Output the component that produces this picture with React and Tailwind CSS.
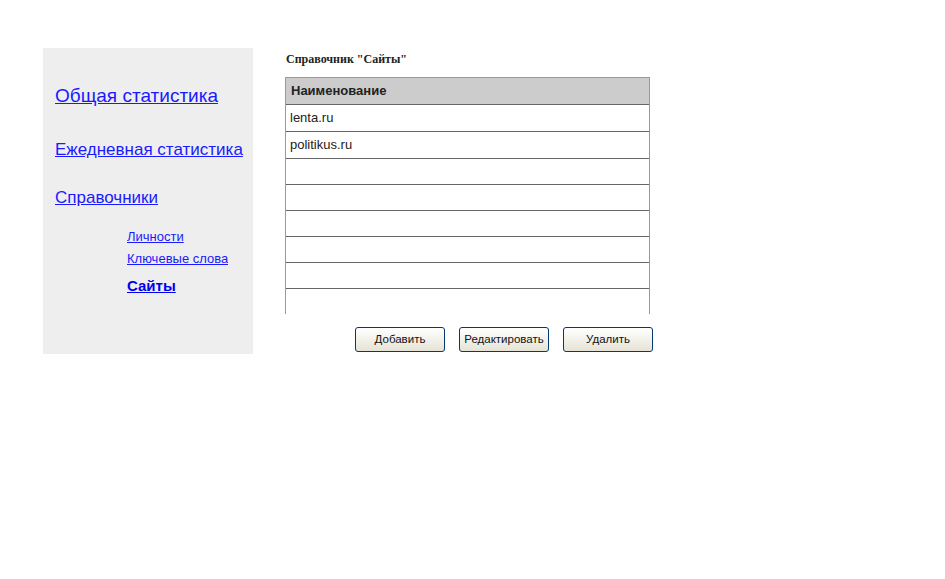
export default function App() {
  const rows = ['lenta.ru', 'politikus.ru']
  const empty = [0, 1, 2, 3, 4, 5]

  return (
    <div className="min-h-[579px] bg-white pl-[43px] pt-[48px] font-['Liberation_Sans',Arial,sans-serif]">
      <div className="flex items-start">
        {/* left menu */}
        <div className="h-[306px] w-[210px] bg-[#eeeeee] pl-[12px] pt-[37px]">
          <a href="#" className="block whitespace-nowrap text-[19px] leading-[22px] text-[#1a1aff] underline">
            Общая статистика
          </a>
          <a href="#" className="mt-[33px] block whitespace-nowrap text-[17px] leading-[20px] text-[#1a1aff] underline">
            Ежедневная статистика
          </a>
          <a href="#" className="mt-[28px] block whitespace-nowrap text-[17px] leading-[20px] text-[#1a1aff] underline">
            Справочники
          </a>
          <div className="pl-[72px]">
            <a href="#" className="mt-[21px] block w-[101px] overflow-hidden whitespace-nowrap text-[13px] leading-[16px] text-[#1a1aff] underline">
              Личности
            </a>
            <a href="#" className="mt-[6px] block w-[101px] overflow-hidden whitespace-nowrap text-[13px] leading-[16px] text-[#1a1aff] underline">
              Ключевые слова
            </a>
            <a href="#" className="mt-[10px] block whitespace-nowrap text-[15px] font-bold leading-[18px] text-[#0000ee] underline">
              Сайты
            </a>
          </div>
        </div>

        {/* main */}
        <div className="ml-[32px]">
          <div className="mt-[3px] pl-[1px] font-['Liberation_Serif','Times_New_Roman',serif] text-[12px] font-bold leading-[16px] text-[#222]">
            Справочник "Сайты"
          </div>

          <div className="mt-[10px] h-[237px] w-[365px] overflow-hidden border-x border-t border-[#999] text-[13px] text-[#222]">
            <div className="h-[27px] border-b border-[#666] bg-[#cccccc] pl-[5px] font-bold leading-[26px]">
              Наименование
            </div>
            {rows.map((r) => (
              <div key={r} className="h-[27px] border-b border-[#666] pl-[4px] leading-[26px]">
                {r}
              </div>
            ))}
            {empty.map((i) => (
              <div key={i} className="h-[26px] border-b border-[#666]" />
            ))}
          </div>

          <div className="ml-[70px] mt-[13px] flex gap-[14px]">
            {['Добавить', 'Редактировать', 'Удалить'].map((b) => (
              <button
                key={b}
                className="h-[25px] w-[90px] rounded-[3px] border border-[#003c74] bg-gradient-to-b from-white to-[#e6e3d6] text-[11.5px] text-[#111]"
              >
                {b}
              </button>
            ))}
          </div>
        </div>
      </div>
    </div>
  )
}
